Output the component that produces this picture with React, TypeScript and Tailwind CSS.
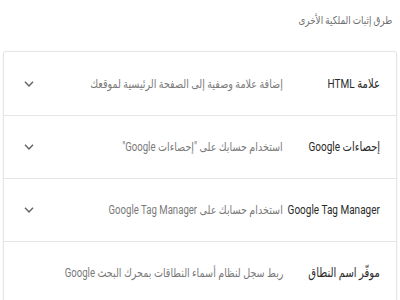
import React from "react";

const rows = [
  { title: "علامة HTML", desc: "إضافة علامة وصفية إلى الصفحة الرئيسية لموقعك" },
  { title: "إحصاءات Google", desc: "استخدام حسابك على \"إحصاءات Google\"" },
  { title: "Google Tag Manager", desc: "استخدام حسابك على Google Tag Manager" },
  { title: "موفّر اسم النطاق", desc: "ربط سجل لنظام أسماء النطاقات بمحرك البحث Google" },
];

function Chevron() {
  return (
    <svg width="10" height="6" viewBox="0 0 10 6" className="block">
      <path d="M1 0.8 L5 5 L9 0.8" fill="none" stroke="#5f6368" strokeWidth="1.4" />
    </svg>
  );
}

export default function App() {
  return (
    <div
      dir="rtl"
      className="w-[400px] h-[300px] overflow-hidden bg-white"
      style={{ fontFamily: 'Roboto, "DejaVu Sans", sans-serif' }}
    >
      <div className="pt-[14px] pr-[8px] h-[51px] text-[11px] leading-[13px] text-[#6f6f6f]">
        <span className="inline-block scale-x-[0.8] origin-right whitespace-nowrap">طرق إثبات الملكية الأخرى</span>
      </div>
      <div className="mx-[3px] border border-[#e6e6e6] rounded-[2px] shadow-[0_1px_2px_rgba(0,0,0,0.08)]">
        {rows.map((r, i) => (
          <div
            key={i}
            className={`flex items-center h-[63px] pr-[16px] pl-[20px] ${i > 0 ? "border-t border-[#e6e6e6]" : ""}`}
          >
            <div className="w-[97px] shrink-0 text-[13px] text-[#2b2b2b] whitespace-nowrap">
              <span className="inline-block scale-x-[0.77] origin-right">{r.title}</span>
            </div>
            <div className="flex-1 text-[12px] text-[#7a7a7a] whitespace-nowrap">
              <span className="inline-block scale-x-[0.8] origin-right">{r.desc}</span>
            </div>
            <Chevron />
          </div>
        ))}
      </div>
    </div>
  );
}
